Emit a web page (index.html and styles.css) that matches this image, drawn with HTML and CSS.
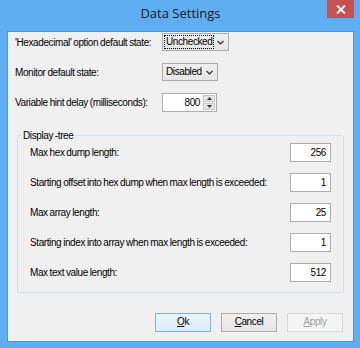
FILE: index.html
```html
<!DOCTYPE html>
<html>
<head>
<meta charset="utf-8">
<link rel="stylesheet" href="styles.css">
</head>
<body>
<div class="window">
  <div class="titlebar">
    <span></span>
    <div class="title">Data Settings</div>
    <div class="close"><svg width="10" height="9" viewBox="0 0 10 9"><path d="M1 0.5 L9 8.5 M9 0.5 L1 8.5" stroke="#fff" stroke-width="2"/></svg></div>
  </div>
  <div class="client">
    <div class="top">
      <div class="row">
        <span class="label">'Hexadecimal' option default state:</span>
        <div class="combo w66"><span class="val focus">Unchecked</span><svg class="chev" width="7" height="5" viewBox="0 0 7 5"><path d="M0.5 1 L3.5 4 L6.5 1" stroke="#333" stroke-width="1.2" fill="none"/></svg></div>
      </div>
      <div class="row">
        <span class="label">Monitor default state:</span>
        <div class="combo w56"><span class="val">Disabled</span><svg class="chev" width="7" height="5" viewBox="0 0 7 5"><path d="M0.5 1 L3.5 4 L6.5 1" stroke="#333" stroke-width="1.2" fill="none"/></svg></div>
      </div>
      <div class="row">
        <span class="label">Variable hint delay (milliseconds):</span>
        <div class="spin"><span class="num">800</span><div class="btns"><div class="sb"><svg width="5" height="3" viewBox="0 0 5 3"><path d="M2.5 0 L5 3 L0 3 Z" fill="#333"/></svg></div><div class="sb"><svg width="5" height="3" viewBox="0 0 5 3"><path d="M0 0 L5 0 L2.5 3 Z" fill="#333"/></svg></div></div></div>
      </div>
    </div>
    <fieldset class="group">
      <legend>Display -tree</legend>
      <div class="grow"><span>Max hex dump length:</span><div class="edit">256</div></div>
      <div class="grow"><span>Starting offset into hex dump when max length is exceeded:</span><div class="edit">1</div></div>
      <div class="grow"><span>Max array length:</span><div class="edit">25</div></div>
      <div class="grow"><span>Starting index into array when max length is exceeded:</span><div class="edit">1</div></div>
      <div class="grow"><span>Max text value length:</span><div class="edit">512</div></div>
    </fieldset>
    <div class="buttons">
      <div class="btn default"><u>O</u>k</div>
      <div class="btn"><u>C</u>ancel</div>
      <div class="btn disabled"><u>A</u>pply</div>
    </div>
  </div>
</div>
</body>
</html>
```
FILE: styles.css
```css
html, body {
  margin: 0;
  padding: 0;
}
body {
  width: 360px;
  height: 348px;
  overflow: hidden;
  font-family: "Liberation Sans", Arial, sans-serif;
  font-size: 10px;
  letter-spacing: -0.4px;
  word-spacing: -0.5px;
  color: #000;
  white-space: nowrap;
}
.window {
  width: 360px;
  height: 348px;
  box-sizing: border-box;
  background: #60aef2;
  padding: 0 6px 6px 7px;
  display: flex;
  flex-direction: column;
}
.titlebar {
  height: 31px;
  flex: none;
  display: grid;
  grid-template-columns: 1fr auto 1fr;
}
.title {
  font-family: "Open Sans", "Noto Sans", sans-serif;
  font-size: 13px;
  letter-spacing: 0;
  word-spacing: 0;
  color: #1a1a1a;
  padding-top: 4px;
}
.close {
  justify-self: end;
  width: 27px;
  height: 18px;
  background: #c75050;
  display: flex;
  align-items: center;
  justify-content: center;
}
.client {
  flex: 1;
  background: #f0f0f0;
  border: 1px solid #4c98dc;
  display: flex;
  flex-direction: column;
  padding: 1px 9px 0 7px;
}
.top {
  display: flex;
  flex-direction: column;
  gap: 12px;
}
.row {
  display: flex;
  align-items: center;
  height: 18px;
}
.label {
  width: 147px;
  flex: none;
}
.combo {
  flex: none;
  height: 18px;
  box-sizing: border-box;
  border: 1px solid #adadad;
  background: linear-gradient(#f0f0f0, #e5e5e5);
  display: flex;
  align-items: center;
  padding: 0 0 0 1px;
}
.w66 { width: 67px; }
.w56 { width: 56px; }
.val {
  padding: 0 1px;
  line-height: 12px;
  border: 1px solid transparent;
}
.val.focus {
  border: 1px dotted #000;
}
.chev {
  margin-left: auto;
  margin-right: 4px;
}
.spin {
  flex: none;
  width: 55px;
  height: 19px;
  box-sizing: border-box;
  border: 1px solid #abadb3;
  background: #fff;
  display: flex;
  align-items: center;
}
.num {
  flex: 1;
  text-align: right;
  padding-right: 3px;
}
.btns {
  width: 12px;
  height: 15px;
  display: flex;
  flex-direction: column;
  gap: 1px;
  margin-right: 1px;
}
.sb {
  flex: 1;
  background: #e5e5e5;
  border: 1px solid #c8c8c8;
  box-sizing: border-box;
  display: flex;
  align-items: center;
  justify-content: center;
}
.group {
  margin: 19px 0 0 2px;
  border: 1px solid #d5dfe5;
  border-radius: 2px;
  padding: 2px 12px 11px 12px;
  min-inline-size: auto;
  display: flex;
  flex-direction: column;
  gap: 12px;
}
.group legend {
  padding: 0 2px;
  margin-left: -9px;
}
.grow {
  display: flex;
  align-items: center;
  justify-content: space-between;
  height: 18px;
}
.edit {
  flex: none;
  width: 41px;
  height: 19px;
  box-sizing: border-box;
  border: 1px solid #abadb3;
  background: #fff;
  text-align: right;
  padding: 3px 4px 0 0;
}
.buttons {
  display: flex;
  justify-content: flex-end;
  gap: 10px;
  margin-top: 20px;
  margin-right: 1px;
}
.btn {
  width: 56px;
  height: 19px;
  box-sizing: border-box;
  border: 1px solid #acacac;
  background: linear-gradient(#f0f0f0, #e5e5e5);
  text-align: center;
  line-height: 16px;
}
.btn u { text-decoration: underline; text-underline-offset: 1px; }
.btn.default {
  border-color: #7eb4ea;
  background: linear-gradient(#ecf4fc, #dcecfc);
}
.btn.disabled {
  border-color: #d9d9d9;
  background: #f4f4f4;
  color: #a0a0a0;
}
```
